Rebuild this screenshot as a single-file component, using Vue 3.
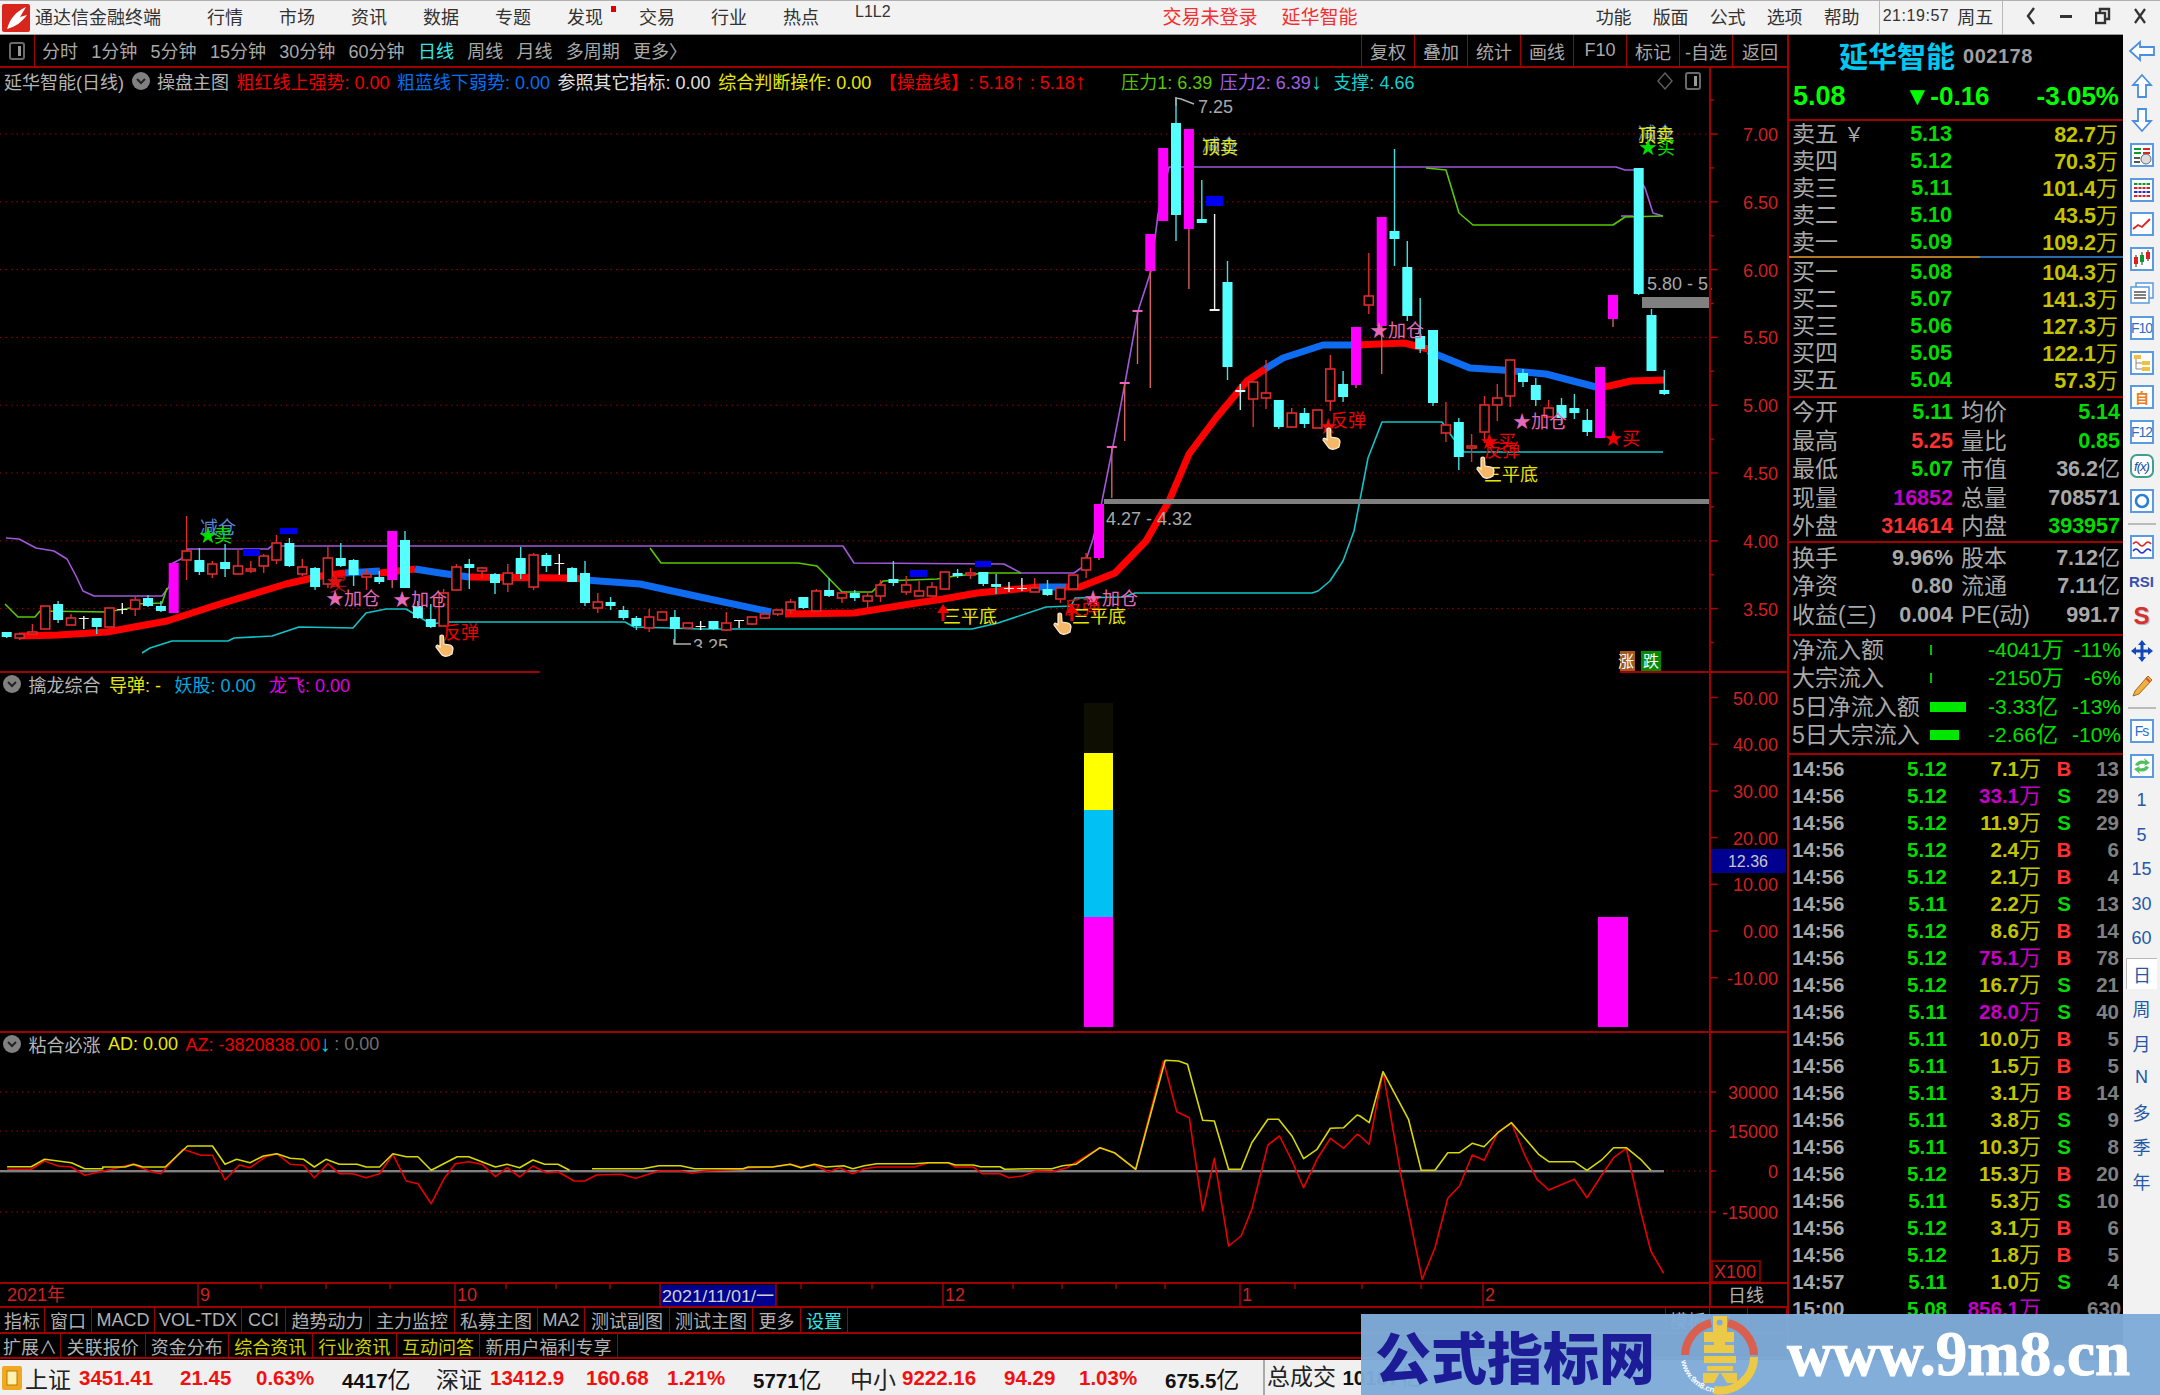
<template>
  <div class="app">
    <header class="titlebar">
      <svg class="logo" viewBox="0 0 28 28" width="28" height="28">
        <rect width="28" height="28" rx="2" fill="#d8261c" />
        <path d="M5 25 C8 15 13 8 24 3 L18 13 L25 11 C20 18 13 23 5 25Z" fill="#fff" />
      </svg>
      <span class="appname">通达信金融终端</span>
      <nav class="menu">
        <span v-for="m in menus" :key="m" class="menu-item">{{ m }}<i v-if="m === '发现'" class="dot"></i></span>
        <span class="menu-item latin">L1L2</span>
      </nav>
      <span class="alert a1">交易未登录</span>
      <span class="alert a2">延华智能</span>
      <nav class="menu menu2">
        <span v-for="m in menus2" :key="m" class="menu-item">{{ m }}</span>
      </nav>
      <div class="clock"><span class="time">21:19:57</span><span>周五</span></div>
      <div class="winctl">
        <svg width="12" height="20" viewBox="0 0 12 20"><path d="M9 2 L3 10 L9 18" fill="none" stroke="#333" stroke-width="2.4" /></svg>
        <svg width="14" height="20" viewBox="0 0 14 20"><rect x="1" y="9" width="12" height="3" fill="#333" /></svg>
        <svg width="16" height="20" viewBox="0 0 16 20"><rect x="1" y="7" width="9" height="10" fill="none" stroke="#333" stroke-width="2.4" /><path d="M5 6 V3 H14 V13 H11" fill="none" stroke="#333" stroke-width="2.4" /></svg>
        <svg width="14" height="20" viewBox="0 0 14 20"><path d="M2 3 L12 17 M12 3 L2 17" stroke="#333" stroke-width="2.2" /></svg>
      </div>
    </header>

    <div class="body">
      <section class="left">
        <div class="toolbar">
          <div class="tb-icon"><span class="win-ico"></span></div>
          <div class="periods">
            <span v-for="p in periods" :key="p" :class="{ on: p === '日线' }">{{ p }}</span>
            <span>更多〉</span>
          </div>
          <div class="tb-cells">
            <span v-for="c in tbCells" :key="c">{{ c }}</span>
          </div>
        </div>

        <div class="pane pane-main">
          <svg class="chart" width="1787" height="605" viewBox="0 67 1787 605">
            <line v-for="g in mainGrid" :key="g" x1="0" x2="1710" :y1="g" :y2="g" class="dots" />
            <polyline :points="pts(purpleLine)" class="thin" stroke="#a058d8" />
            <polyline :points="pts(purpleStub)" class="thin" stroke="#a058d8" />
            <polyline :points="pts(greenLineA)" class="thin" stroke="#58c800" />
            <polyline :points="pts(greenLineB)" class="thin" stroke="#58c800" />
            <polyline :points="pts(greenLineC)" class="thin" stroke="#58c800" />
            <polyline :points="pts(cyanLine)" class="thin" stroke="#10c4c8" />
            <polyline v-for="(s, i) in maLine" :key="i" :points="pts(s.p)" class="ma" :stroke="s.c" />

            <rect x="1104" y="498" width="606" height="5" fill="#808080" />
            <rect x="1642" y="296" width="68" height="11" fill="#808080" />

            <g v-for="c in candles" :key="c.i">
              <line :x1="c.x" :x2="c.x" :y1="c.hi" :y2="c.lo" :stroke="c.wick" stroke-width="1.4" />
              <rect v-if="c.type === 'r'" :x="c.x - 4.5" :y="c.top" width="9" :height="c.h" fill="#000" stroke="#e02c2c" stroke-width="1.6" />
              <rect v-else :x="c.x - 5" :y="c.top" width="10" :height="c.h" :fill="c.fill" />
            </g>

            <rect v-for="b in blueBlocks" :key="b[0]" :x="b[0]" :y="b[1]" :width="b[2]" :height="b[3]" fill="#0000f0" />

            <text v-for="(a, i) in notes" :key="i" :x="a[0]" :y="a[1]" :fill="a[3]" class="note">{{ a[2] }}</text>
            <g v-for="h in hands" :key="h[0]" :transform="`translate(${h[0]} ${h[1]})`">
              <path d="M5 1 Q7 -1 8.5 1 L9 9 L15 10 Q18 11 18 14 L17 19 Q11 23 7 20 L1 12 Q1 9 4 11 L5 12Z" fill="#f4b868" stroke="#fff0d8" stroke-width="1.2" />
            </g>
            <g v-for="u in upArrows" :key="u" fill="#f00000">
              <polygon :points="`${u - 6},612 ${u},603 ${u + 6},612`" />
              <rect :x="u - 1.5" y="610" width="3" height="10" />
            </g>

            <polyline points="1176,105 1176,97 1181,98 1194,103" fill="none" stroke="#b0b0b0" stroke-width="1.4" />
            <text x="1198" y="112" class="gr">7.25</text>
            <text x="1106" y="524" class="gr">4.27 - 4.32</text>
            <text x="1647" y="289" class="gr">5.80 - 5.</text>
            <polyline points="674,638 674,643 691,643" fill="none" stroke="#b0b0b0" stroke-width="1.4" />
            <text x="693" y="651" class="gr">3.25</text>
            <rect x="680" y="647" width="70" height="23" fill="#000" />

            <rect x="1620" y="650" width="15" height="20" fill="#a05a20" />
            <rect x="1641" y="650" width="20" height="20" fill="#068a06" />
            <text x="1618" y="666" class="badge">涨</text>
            <text x="1643" y="666" class="badge">跌</text>

            <rect x="0" y="670" width="540" height="2" fill="#a00000" />
            <rect x="1620" y="670" width="167" height="2" fill="#a00000" />
            <rect x="1709" y="67" width="2" height="605" fill="#a00000" />
            <g v-for="t in mainTicks" :key="t.y">
              <line x1="1710" :x2="t.major ? 1718 : 1714" :y1="t.y" :y2="t.y" stroke="#b00000" stroke-width="1.5" />
              <text v-if="t.label" x="1778" :y="t.y + 7" class="ax">{{ t.label }}</text>
            </g>
          </svg>
          <div class="pane-head">
            <span class="gy">延华智能(日线)</span>
            <svg class="chev" width="18" height="18" viewBox="0 0 18 18"><circle cx="9" cy="9" r="9" fill="#808080" /><path d="M5 7 L9 11 L13 7" fill="none" stroke="#222" stroke-width="2" /></svg>
            <span class="gy">操盘主图</span>
            <span class="rd">粗红线上强势: 0.00</span>
            <span class="bl">粗蓝线下弱势: 0.00</span>
            <span class="wh">参照其它指标: 0.00</span>
            <span class="yl">综合判断操作: 0.00</span>
            <span class="rd">【操盘线】: 5.18<b class="arr">↑</b> : 5.18<b class="arr">↑</b></span>
            <span class="gn gap1">压力1: 6.39</span>
            <span class="pu">压力2: 6.39<b class="arr cy">↓</b></span>
            <span class="cy gap2">支撑: 4.66</span>
            <span class="head-ico">
              <svg width="16" height="20" viewBox="0 0 16 20"><path d="M8 2 L15 10 L8 18 L1 10Z" fill="none" stroke="#606060" stroke-width="1.4" /></svg>
              <span class="win-ico"></span>
            </span>
          </div>
        </div>

        <div class="pane pane-sub">
          <svg class="chart" width="1787" height="358" viewBox="0 672 1787 358">
            <rect x="1084" y="702" width="29" height="50" fill="#0e0e02" />
            <rect x="1084" y="752" width="29" height="57" fill="#ffff00" />
            <rect x="1084" y="809" width="29" height="107" fill="#00c0f4" />
            <rect x="1084" y="916" width="29" height="110" fill="#ff00ff" />
            <rect x="1598" y="916" width="30" height="110" fill="#ff00ff" />
            <rect x="1709" y="672" width="2" height="358" fill="#a00000" />
            <rect x="1711" y="848" width="75" height="24" fill="#000090" />
            <text x="1748" y="866" class="boxed">12.36</text>
            <g v-for="t in subTicks" :key="t.y">
              <line x1="1710" x2="1718" :y1="t.y" :y2="t.y" stroke="#b00000" stroke-width="1.5" />
              <text x="1778" :y="t.y + 7" class="ax">{{ t.label }}</text>
            </g>
          </svg>
          <div class="pane-head head2">
            <svg class="chev" width="18" height="18" viewBox="0 0 18 18"><circle cx="9" cy="9" r="9" fill="#808080" /><path d="M5 7 L9 11 L13 7" fill="none" stroke="#222" stroke-width="2" /></svg>
            <span class="gy">擒龙综合</span>
            <span class="yl sp">导弹: -</span>
            <span class="ao sp2">妖股: 0.00</span>
            <span class="mg sp2">龙飞: 0.00</span>
          </div>
        </div>

        <div class="pane pane-ad">
          <svg class="chart" width="1787" height="253" viewBox="0 1030 1787 253">
            <rect x="0" y="1029" width="1787" height="3" fill="#a00000" />
            <line v-for="g in adGrid" :key="g" x1="0" x2="1710" :y1="g" :y2="g" class="dots" />
            <rect x="0" y="1169" width="1664" height="2.4" fill="#808080" />
            <polyline :points="pts(adRed)" class="thin" stroke="#e80000" stroke-width="1.6" />
            <polyline :points="pts(adYellowA)" class="thin" stroke="#d8d800" stroke-width="2" />
            <polyline :points="pts(adYellowB)" class="thin" stroke="#d8d800" stroke-width="2" />
            <rect x="1709" y="1030" width="2" height="253" fill="#a00000" />
            <g v-for="t in adTicks" :key="t.y">
              <line x1="1710" x2="1716" :y1="t.y" :y2="t.y" stroke="#b00000" stroke-width="1.5" />
              <text x="1778" :y="t.y + 7" class="ax">{{ t.label }}</text>
            </g>
            <rect x="1712" y="1260" width="48" height="21" fill="none" stroke="#a00000" stroke-width="1.5" />
            <text x="1714" y="1277" class="ax start">X100</text>
            <rect x="0" y="1281" width="1787" height="2" fill="#a00000" />
          </svg>
          <div class="pane-head head3">
            <svg class="chev" width="18" height="18" viewBox="0 0 18 18"><circle cx="9" cy="9" r="9" fill="#808080" /><path d="M5 7 L9 11 L13 7" fill="none" stroke="#222" stroke-width="2" /></svg>
            <span class="gy">粘合必涨</span>
            <span class="yl">AD: 0.00</span>
            <span class="rd">AZ: -3820838.00<b class="arr cy">↓</b></span>
            <span class="dim">: 0.00</span>
          </div>
        </div>

        <svg class="chart" width="1787" height="22" viewBox="0 1283 1787 22">
          <rect x="660" y="1284" width="116" height="21" fill="#000090" />
          <line v-for="s in axisMarks" :key="s" :x1="s" :x2="s" y1="1283" y2="1305" stroke="#a00000" stroke-width="1.5" />
          <line v-for="s in axisTicks" :key="s" :x1="s" :x2="s" y1="1283" y2="1288" stroke="#a00000" stroke-width="1.5" />
          <text v-for="s in axisLabels" :key="s[1]" :x="s[0]" y="1300" class="ax start">{{ s[1] }}</text>
          <text x="662" y="1301" class="dateTag" textLength="112" lengthAdjust="spacingAndGlyphs">2021/11/01/一</text>
          <text x="1728" y="1301" class="axis-name">日线</text>
          <rect x="1709" y="1283" width="2" height="22" fill="#a00000" />
        </svg>

        <div class="tabs tabs1">
          <span v-for="t in tabs1" :key="t" :class="{ cyan: t === '设置' }">{{ t }}</span>
          <span></span>
          <span>模板</span>
          <span>∧</span>
          <span></span>
        </div>
        <div class="tabs tabs2">
          <span v-for="t in tabs2" :key="t.n" :class="{ ylw: t.y }">{{ t.n }}</span>
        </div>
      </section>

      <aside class="panel">
        <div class="q-name"><span class="stock">延华智能</span><span class="code">002178</span></div>
        <div class="q-price"><span class="p-now">5.08</span><span class="p-chg">▼-0.16</span><span class="p-pct">-3.05%</span></div>

        <div class="rows sell">
          <div v-for="r in sells" :key="r[0]" class="row">
            <span class="lbl">{{ r[0] }}<i v-if="r[0] === '卖五'" class="yen">￥</i></span>
            <b class="v px green">{{ r[1] }}</b>
            <b class="v vol ylw">{{ r[2] }}<em>万</em></b>
          </div>
        </div>
        <div class="divider"></div>
        <div class="rows buy">
          <div v-for="r in buys" :key="r[0]" class="row">
            <span class="lbl">{{ r[0] }}</span>
            <b class="v px green">{{ r[1] }}</b>
            <b class="v vol ylw">{{ r[2] }}<em>万</em></b>
          </div>
        </div>

        <div class="rows stat topline">
          <div v-for="r in stats" :key="r[0]" class="row2">
            <span class="lbl">{{ r[0] }}</span>
            <b class="v v1" :class="r[2]">{{ r[1] }}</b>
            <span class="lbl l2">{{ r[3] }}</span>
            <b class="v v2" :class="r[5]">{{ num(r[4]) }}<em>{{ unit(r[4]) }}</em></b>
          </div>
        </div>
        <div class="rows stat topline stat2">
          <div v-for="r in stats2" :key="r[0]" class="row2">
            <span class="lbl">{{ r[0] }}</span>
            <b class="v v1 grey">{{ r[1] }}</b>
            <span class="lbl l2">{{ r[2] }}</span>
            <b class="v v2 grey">{{ num(r[3]) }}<em>{{ unit(r[3]) }}</em></b>
          </div>
        </div>
        <div class="rows flow topline">
          <div v-for="r in flows" :key="r[0]" class="row3">
            <span class="lbl">{{ r[0] }}</span>
            <span class="barcell"><i class="bar" :class="{ slim: r[1] < 4 }" :style="{ width: r[1] + 'px' }"></i></span>
            <b class="v fv green">{{ num(r[2]) }}<em>{{ unit(r[2]) }}</em></b>
            <b class="v fp green">{{ r[3] }}</b>
          </div>
        </div>
        <div class="rows ticks topline">
          <div v-for="(r, i) in ticks" :key="i" class="row4">
            <b class="t-time">{{ r[0] }}</b>
            <b class="t-px green">{{ r[1] }}</b>
            <b class="t-vol" :class="r[2] >= 20 ? 'mag' : 'ylw'">{{ r[2] }}<em>万</em></b>
            <b class="t-bs" :class="r[3] === 'B' ? 'red' : 'green'">{{ r[3] }}</b>
            <b class="t-ct">{{ r[4] }}</b>
          </div>
        </div>
      </aside>

      <aside class="side">
        <div class="tool"><svg width="28" height="22" viewBox="0 0 28 22"><path d="M2 11 L12 2 V7 H26 V15 H12 V20Z" class="arrow" /></svg></div>
        <div class="tool"><svg width="22" height="26" viewBox="0 0 22 26"><path d="M11 2 L20 12 H15 V24 H7 V12 H2Z" class="arrow" /></svg></div>
        <div class="tool"><svg width="22" height="26" viewBox="0 0 22 26"><path d="M11 24 L20 14 H15 V2 H7 V14 H2Z" class="arrow" /></svg></div>
        <div class="tool"><svg width="24" height="24" viewBox="0 0 24 24"><rect x="1" y="1" width="22" height="22" class="frame" /><path d="M4 6H11M4 10H11" stroke="#0a9a30" stroke-width="2" /><path d="M13 6H20M13 10H20" stroke="#e02020" stroke-width="2" /><path d="M4 15H10M4 19H10" stroke="#555" stroke-width="2" /><circle cx="16" cy="16" r="5" fill="#ddd" stroke="#666" /></svg></div>
        <div class="tool"><svg width="24" height="24" viewBox="0 0 24 24"><rect x="1" y="1" width="22" height="22" class="frame" /><path d="M4 6H20" stroke="#0a9a30" stroke-width="2" /><path d="M4 10H20" stroke="#e02020" stroke-width="2" /><path d="M4 14H20" stroke="#2030d0" stroke-width="2" /><path d="M4 18H20" stroke="#e02020" stroke-width="2" /><path d="M8 4V20M12 4V20M16 4V20" stroke="#fff" /></svg></div>
        <div class="tool"><svg width="24" height="24" viewBox="0 0 24 24"><rect x="1" y="1" width="22" height="22" class="frame" /><path d="M3 17 L8 13 L12 15 L20 7" fill="none" stroke="#e02020" stroke-width="1.8" /></svg></div>
        <div class="tool"><svg width="24" height="24" viewBox="0 0 24 24"><rect x="1" y="1" width="22" height="22" class="frame" /><path d="M6 8V20M12 5V18M18 3V14" stroke="#222" /><rect x="4" y="10" width="4" height="7" fill="#e02020" /><rect x="10" y="8" width="4" height="7" fill="#0a9a30" /><rect x="16" y="5" width="4" height="7" fill="#e02020" /></svg></div>
        <div class="tool"><svg width="24" height="24" viewBox="0 0 24 24"><rect x="6" y="2" width="17" height="15" fill="#fff" stroke="#5a9ae0" stroke-width="1.5" /><rect x="1" y="6" width="18" height="16" fill="#fff" stroke="#5a9ae0" stroke-width="1.5" /><path d="M4 11H16M4 14H16M4 17H16" stroke="#555" stroke-width="1.4" /></svg></div>
        <div class="tool"><span class="boxed-t">F10</span></div>
        <div class="tool"><svg width="24" height="24" viewBox="0 0 24 24"><rect x="1" y="1" width="22" height="22" class="frame" /><path d="M6 7V18H12M6 12H12" fill="none" stroke="#888" /><rect x="4" y="4" width="7" height="4" fill="#f0c040" /><rect x="12" y="10" width="8" height="4" fill="#f0c040" /><rect x="12" y="16" width="8" height="4" fill="#f0c040" /></svg></div>
        <div class="tool"><span class="boxed-t zi">自</span></div>
        <div class="tool"><span class="boxed-t">F12</span></div>
        <div class="tool"><span class="boxed-t fx">f(x)</span></div>
        <div class="tool"><svg width="24" height="24" viewBox="0 0 24 24"><rect x="1" y="1" width="22" height="22" class="frame" /><circle cx="12" cy="12" r="6" fill="none" stroke="#2a80d0" stroke-width="2.6" /></svg></div>
        <div class="tool-sep"></div>
        <div class="tool"><svg width="24" height="24" viewBox="0 0 24 24"><rect x="1" y="1" width="22" height="22" class="frame" /><path d="M3 9 Q6 5 9 9 T15 9 T21 9" fill="none" stroke="#e02020" stroke-width="1.5" /><path d="M3 16 Q6 12 9 16 T15 16 T21 16" fill="none" stroke="#2030d0" stroke-width="1.5" /></svg></div>
        <div class="tool"><span class="rsi">RSI</span></div>
        <div class="tool"><span class="big-s">S</span></div>
        <div class="tool"><svg width="24" height="24" viewBox="0 0 24 24" fill="#1048b8"><path d="M12 1 L16 6 H8Z M12 23 L16 18 H8Z M1 12 L6 8 V16Z M23 12 L18 8 V16Z" /><rect x="6" y="10.5" width="12" height="3" /><rect x="10.5" y="6" width="3" height="12" /></svg></div>
        <div class="tool"><svg width="24" height="24" viewBox="0 0 24 24"><path d="M5 18 L18 3 L22 7 L9 21 L3 23Z" fill="#f0b040" stroke="#a06a20" /><path d="M16 5 L20 9" stroke="#d85040" stroke-width="2" /></svg></div>
        <div class="tool-sep"></div>
        <div class="tool"><span class="boxed-t">Fs</span></div>
        <div class="tool"><svg width="24" height="24" viewBox="0 0 24 24"><rect x="1" y="1" width="22" height="22" class="frame" /><path d="M5 11 Q8 5 15 7 L14 4 L20 9 L14 12 L15 10 Q10 9 8 12Z M19 13 Q16 19 9 17 L10 20 L4 15 L10 12 L9 14 Q14 15 16 12Z" fill="#50c060" /></svg></div>
        <div v-for="n in sideNums" :key="n" class="tool nm" :class="{ active: n === '日' }"><span>{{ n }}</span></div>
      </aside>
    </div>

    <footer class="status">
      <svg width="25" height="30" viewBox="0 0 25 30"><rect x="2" y="3" width="20" height="24" rx="2" fill="#f0a820" /><rect x="7" y="8" width="10" height="14" fill="#fff1b0" stroke="#c07800" /></svg>
      <template v-for="x in indexes" :key="x[0]">
        <span class="ix-name">{{ x[0] }}</span>
        <b class="ix-red">{{ x[1] }}</b>
        <b class="ix-red">{{ x[2] }}</b>
        <b class="ix-red">{{ x[3] }}</b>
        <b class="ix-amt">{{ x[4] }}<em>亿</em></b>
      </template>
      <span class="ix-total">总成交 <b class="ix-amt">10187<em>亿</em></b></span>
    </footer>

    <div class="watermark">
      <span class="wm-cn">公式指标网</span>
      <svg class="wm-logo" width="84" height="84" viewBox="18 12 84 84">
        <defs><path id="wmArc" d="M22 60 A40 40 0 0 0 58 92" /></defs>
        <path d="M26 54 A34 34 0 0 1 52 22" fill="none" stroke="#d9604e" stroke-width="8" />
        <path d="M69 22 A34 34 0 0 1 95 54" fill="none" stroke="#d9604e" stroke-width="8" />
        <path d="M95 56 A34 34 0 0 1 55 89" fill="none" stroke="#ecca48" stroke-width="8" />
        <path d="M54 15 H68 V31 H75 V52 H45 V31 H54Z" fill="#ecca48" />
        <circle cx="60.7" cy="21.5" r="3" fill="#7fabd9" />
        <rect x="45" y="41" width="10" height="3" fill="#7fabd9" />
        <rect x="66" y="41" width="9" height="3" fill="#7fabd9" />
        <rect x="45" y="55" width="32" height="7" fill="#ecca48" />
        <rect x="48" y="65" width="26" height="5" fill="#ecca48" />
        <path d="M44 72 H78 V82 H68 L61 71 L55 82 H44Z" fill="#ecca48" />
        <text class="wm-small"><textPath href="#wmArc">www.9m8.cn</textPath></text>
      </svg>
      <span class="wm-url">www.9m8.cn</span>
    </div>
  </div>
</template>

<script setup>
const pts = (a) => a.map((p) => p.join(',')).join(' ')
const num = (s) => s.replace(/[万亿]/, '')
const unit = (s) => (/[万亿]/.exec(s) || [''])[0]

const menus = ['行情', '市场', '资讯', '数据', '专题', '发现', '交易', '行业', '热点']
const menus2 = ['功能', '版面', '公式', '选项', '帮助']
const periods = ['分时', '1分钟', '5分钟', '15分钟', '30分钟', '60分钟', '日线', '周线', '月线', '多周期']
const tbCells = ['复权', '叠加', '统计', '画线', 'F10', '标记', '-自选', '返回']
const tabs1 = ['指标', '窗口', 'MACD', 'VOL-TDX', 'CCI', '趋势动力', '主力监控', '私募主图', 'MA2', '测试副图', '测试主图', '更多', '设置']
const tabs2 = [
  { n: '扩展∧' }, { n: '关联报价' }, { n: '资金分布' }, { n: '综合资讯', y: 1 },
  { n: '行业资讯', y: 1 }, { n: '互动问答', y: 1 }, { n: '新用户福利专享' },
]
const sideNums = ['1', '5', '15', '30', '60', '日', '周', '月', 'N', '多', '季', '年']

// [index, type, body top, body bottom, high, low] in page pixels, read off the picture
const raw = [
  [0,'c',631,636,631,637],[1,'r',633,637,632,639],[2,'r',631,633,623,633],[3,'r',605,628,605,628],
  [4,'c',603,619,600,622],[5,'r',617,624,613,624],[6,'w',617,618,615,628],[7,'c',617,626,617,633],
  [8,'r',607,626,607,626],[9,'w',608,609,602,613],[10,'r',599,608,595,615],[11,'c',597,605,594,606],
  [12,'c',605,610,600,611],[13,'m',562,612,562,612],[14,'r',550,559,515,579],[15,'c',559,571,547,574],
  [16,'r',563,573,560,577],[17,'c',561,568,543,576],[18,'r',565,573,549,573],[19,'r',568,570,560,572],
  [20,'r',555,565,553,572],[21,'r',542,559,534,563],[22,'c',542,565,537,566],[23,'r',566,573,558,575],
  [24,'c',567,586,566,589],[25,'r',557,583,546,587],[26,'c',557,565,542,566],[27,'c',559,574,558,585],
  [28,'r',573,576,568,589],[29,'c',576,581,570,583],[30,'m',530,579,530,587],[31,'c',539,587,530,587],
  [32,'c',605,617,600,618],[33,'c',618,626,603,627],[34,'r',592,625,588,625],[35,'r',566,589,563,589],
  [36,'c',563,567,558,588],[37,'r',567,570,566,577],[38,'c',573,582,572,593],[39,'r',572,583,563,591],
  [40,'c',557,573,546,578],[41,'r',554,586,552,589],[42,'c',554,565,552,571],[43,'w',562,563,553,574],
  [44,'c',567,581,566,581],[45,'c',572,602,560,605],[46,'r',601,607,592,612],[47,'c',601,605,596,609],
  [48,'c',609,617,605,619],[49,'c',617,625,615,629],[50,'r',616,627,608,631],[51,'r',611,619,611,619],
  [52,'c',616,628,609,643],[53,'r',622,627,622,628],[54,'w',625,626,620,629],[55,'c',620,628,620,629],
  [56,'r',622,629,611,630],[57,'w',619,620,619,627],[58,'r',616,623,616,624],[59,'r',613,617,613,618],
  [60,'r',609,613,608,615],[61,'r',601,609,598,613],[62,'c',596,607,596,608],[63,'r',590,610,588,610],
  [64,'c',589,595,577,596],[65,'r',592,597,591,602],[66,'c',592,597,589,600],[67,'r',595,600,590,607],
  [68,'r',584,595,579,601],[69,'c',578,582,560,585],[70,'r',584,591,575,594],[71,'r',590,595,580,595],
  [72,'r',586,595,581,595],[73,'r',571,588,571,588],[74,'c',572,575,568,577],[75,'r',572,574,567,578],
  [76,'c',571,583,571,585],[77,'c',583,586,573,593],[78,'w',587,588,581,591],[79,'w',587,588,577,590],
  [80,'r',587,591,577,591],[81,'c',588,594,579,595],[82,'r',587,598,587,602],[83,'r',574,588,574,588],
  [84,'r',557,569,552,577],[85,'m',503,557,503,559],[86,'w2',445,447,445,497],[87,'w2',381,383,381,440],
  [88,'w2',309,311,309,363],[89,'m',233,270,233,387],[90,'m',147,220,147,220],[91,'c',122,214,96,240],
  [92,'m',128,228,128,288],[93,'c',218,222,179,222],[94,'w',308,310,213,310],[95,'c',281,366,260,379],
  [96,'w3',389,391,383,409],[97,'r',381,398,380,426],[98,'r',392,397,359,408],[99,'c',399,426,399,428],
  [100,'r',412,426,407,427],[101,'c',412,423,407,427],[102,'r',409,427,409,427],[103,'r',368,400,354,410],
  [104,'c',383,396,370,401],[105,'m',326,384,326,387],[106,'r',295,304,252,313],[107,'m',216,325,216,373],
  [108,'c',230,238,148,265],[109,'c',266,315,240,320],[110,'c',335,348,297,352],[111,'c',329,402,329,405],
  [112,'r',424,432,401,441],[113,'c',421,456,417,469],[114,'r',445,447,433,461],[115,'r',404,431,395,442],
  [116,'r',397,404,383,420],[117,'r',359,395,359,406],[118,'c',372,381,368,386],[119,'c',384,399,377,405],
  [120,'r',407,416,399,416],[121,'c',404,417,397,423],[122,'c',407,412,393,418],[123,'c',419,431,408,435],
  [124,'m',366,437,366,437],[125,'m',294,318,294,326],[127,'c',167,293,167,294],[128,'c',314,370,308,370],
  [129,'c',389,393,369,394],
]
const candleFill = { c: '#55ffff', m: '#ff00ff', w: '#f0f0f0', w2: '#f060c0', w3: '#c8ffff' }
const wickColor = { r: '#e02c2c', c: '#40e0e0', m: '#d86060', w: '#f0f0f0', w2: '#d86060', w3: '#a0f0f0' }
const candles = raw.map(([i, type, top, bottom, hi, lo]) => ({
  i, type, top, hi, lo,
  x: +(6.7 + 12.85 * i).toFixed(1),
  h: bottom - top,
  fill: candleFill[type],
  wick: wickColor[type],
}))

const purpleLine = [[6,537],[19,538],[36,547],[54,550],[67,558],[76,575],[83,590],[94,595],[162,595],[169,586],[173,562],[181,558],[188,548],[268,548],[272,545],[843,545],[854,562],[1004,563],[1021,572],[1074,572],[1084,565],[1093,538],[1100,510],[1113,445],[1125,382],[1138,310],[1151,270],[1158,213],[1169,166],[1616,166],[1625,169],[1634,169],[1645,187],[1653,212],[1663,215]]
const purpleStub = [[1621,215],[1633,215]]
const greenLineA = [[5,603],[18,616],[35,616],[40,610],[107,611],[130,607],[134,603],[162,602],[167,587]]
const greenLineB = [[650,547],[661,562],[798,562],[817,565],[842,591],[872,591],[883,580],[937,578],[955,575],[986,572],[1021,572]]
const greenLineC = [[1426,167],[1446,169],[1459,212],[1473,224],[1613,224],[1625,216],[1663,215]]
const cyanLine = [[142,652],[150,647],[172,640],[228,640],[234,637],[272,635],[299,626],[353,627],[366,612],[386,608],[406,608],[431,623],[446,621],[625,621],[634,626],[670,627],[700,628],[972,628],[998,622],[1046,606],[1071,605],[1075,597],[1124,596],[1135,592],[1312,592],[1318,590],[1330,580],[1343,560],[1354,530],[1368,457],[1382,421],[1442,421],[1453,437],[1464,451],[1663,451]]
const maLine = [
  { c: '#ff0000', p: [[19,635],[58,634],[107,631],[134,626],[167,620],[223,602],[286,583],[321,575],[345,572]] },
  { c: '#0f6cf0', p: [[345,572],[380,570]] },
  { c: '#ff0000', p: [[380,572],[415,568]] },
  { c: '#0f6cf0', p: [[415,568],[440,572],[469,576]] },
  { c: '#ff0000', p: [[469,576],[567,577],[585,578]] },
  { c: '#0f6cf0', p: [[585,579],[640,583],[700,596],[771,611]] },
  { c: '#ff0000', p: [[785,613],[854,612],[910,603],[943,598],[977,592],[1039,586]] },
  { c: '#0f6cf0', p: [[1039,586],[1066,586]] },
  { c: '#ff0000', p: [[1066,586],[1080,586],[1115,572],[1146,540],[1169,500],[1189,453],[1216,417],[1247,380],[1265,368]] },
  { c: '#0f6cf0', p: [[1265,368],[1283,357],[1323,344],[1355,344]] },
  { c: '#ff0000', p: [[1355,344],[1404,342],[1428,348]] },
  { c: '#0f6cf0', p: [[1428,350],[1470,367],[1502,369],[1546,373],[1596,386]] },
  { c: '#ff0000', p: [[1596,386],[1609,385],[1631,380],[1665,379]] },
]
const blueBlocks = [[243,548,17,7],[280,527,17,6],[910,569,17,7],[975,560,16,6],[1206,195,17,10]]

const pink = '#e868b8'
const notes = [
  [200,533,'减仓','#5c88d8'],[199,541,'★','#00e000'],[214,541,'卖','#00e000'],
  [329,590,'买','#a01010'],[326,587,'★','#e01010'],
  [326,604,'★加仓',pink],[393,605,'★加仓',pink],[443,638,'反弹','#f00000'],
  [943,622,'三平底','#e4e400'],[1084,604,'★加仓',pink],[1064,613,'反弹','#f00000'],[1072,622,'三平底','#e4e400'],
  [1202,151,'减仓','#5c88d8'],[1202,153,'顶卖','#e8e800'],
  [1638,139,'减仓','#5c88d8'],[1638,141,'顶卖','#e8e800'],[1639,153,'★买','#00e000'],
  [1370,336,'★加仓',pink],[1513,427,'★加仓',pink],[1330,426,'反弹','#f00000'],[1319,432,'★','#e01010'],
  [1480,447,'★买','#f00000'],[1484,456,'反弹','#f00000'],[1484,480,'三平底','#e4e400'],
  [1604,444,'★买','#f00000'],
]
const hands = [[435,634],[1053,612],[1322,427],[1476,456]]
const upArrows = [943,1072]

const mainY = (p) => 133 + (7 - p) * 135.6
const mainGrid = [7, 6.5, 6, 5.5, 5, 4.5, 4, 3.5].map(mainY)
const mainTicks = []
for (let p = 7.25; p >= 3.25; p -= 0.25) {
  const major = Math.abs(p * 2 - Math.round(p * 2)) < 0.01
  mainTicks.push({ y: mainY(p), major, label: major && p <= 7 ? p.toFixed(2) : '' })
}
const subTicks = [50, 40, 30, 20, 10, 0, -10].map((v) => ({ y: 930 - v * 4.67, label: v.toFixed(2) }))
const adGrid = [1091, 1130, 1170, 1211]
const adTicks = [['30000',1091],['15000',1130],['0',1170],['-15000',1211]].map(([label, y]) => ({ label, y }))
const axisMarks = [198,455,660,776,943,1240,1483]
const axisTicks = [261,326,390,506,556,610,801,872,1013,1062,1116,1165,1295,1362,1421]
const axisLabels = [[7,'2021年'],[200,'9'],[457,'10'],[945,'12'],[1242,'1'],[1485,'2']]

// pane 3 lines, traced from crops: a = crop at x/1.12, b = crop at 1360 + x/1.96
const a = (l) => l.map(([x, y]) => [+(x / 1.12).toFixed(1), +(1020 + y / 3).toFixed(1)])
const b = (l) => l.map(([x, y]) => [+(1360 + x / 1.96).toFixed(1), +(1030 + y / 3).toFixed(1)])
const adYellowA = a([[8,437],[35,437],[50,415],[80,425],[95,443],[115,443],[115,438],[140,438],[150,430],[160,438],[185,438],[210,375],[238,375],[252,430],[265,415],[280,425],[295,405],[310,398],[325,412],[340,415],[352,438],[365,415],[380,430],[400,430],[410,438],[425,438],[440,398],[455,407],[468,407],[483,448],[512,407],[525,407],[555,438],[568,430],[582,440],[597,417],[610,430],[625,430],[638,448]])
const adYellowB = [
  ...a([[663,443],[705,443],[720,443],[738,434],[762,434],[778,443],[832,443],[838,438],[865,438],[885,430],[897,440],[912,430],[925,438],[945,434],[955,443],[968,434],[982,428],[1024,428],[1040,425],[1062,425],[1070,432],[1090,432],[1098,437],[1120,437],[1125,445],[1150,443],[1178,443],[1190,434],[1205,430],[1232,380],[1248,395],[1272,445],[1305,118],[1320,120],[1330,130],[1347,298],[1360,300],[1376,445],[1390,445],[1402,365],[1420,295],[1432,295],[1447,345],[1460,413],[1475,385],[1490,322],[1505,320],[1520,282]]),
  ...b([[0,255],[18,275],[45,122],[95,265],[120,418],[147,418],[172,365],[195,365],[220,337],[243,347],[270,305],[297,275],[350,370],[370,392],[420,392],[445,418],[475,385],[497,350],[522,350],[550,385],[570,418]]),
]
const adRed = [
  ...a([[8,445],[35,445],[50,420],[65,435],[80,438],[95,463],[112,452],[125,445],[148,430],[170,452],[180,458],[205,385],[225,403],[238,403],[252,477],[268,432],[280,440],[297,408],[310,398],[325,430],[340,433],[352,470],[367,428],[380,458],[395,458],[410,470],[425,458],[440,400],[455,480],[468,488],[483,548],[498,470],[510,428],[525,422],[540,430],[555,467],[568,440],[582,468],[597,435],[612,455],[625,452],[643,480],[655,480],[668,462],[695,460],[712,472],[738,450],[762,450],[775,457],[790,450],[832,445],[838,440],[865,438],[885,430],[897,438],[912,432],[928,452],[940,440],[955,458],[968,443],[982,438],[1024,438],[1040,425],[1062,425],[1070,438],[1090,438],[1100,458],[1120,458],[1130,470],[1145,465],[1160,450],[1178,452],[1195,440],[1232,380],[1248,395],[1272,445],[1303,120],[1318,272],[1332,290],[1347,570],[1360,412],[1376,675],[1390,645],[1402,565],[1420,372],[1433,345],[1447,420],[1460,500],[1475,415],[1490,352],[1505,382],[1520,340]]),
  ...b([[0,315],[18,340],[45,122],[80,430],[122,745],[147,650],[172,502],[195,465],[220,372],[243,388],[270,305],[297,275],[322,370],[347,445],[370,477],[420,445],[445,500],[475,430],[497,380],[522,352],[550,540],[570,660],[595,727]]),
]

const sells = [['卖五','5.13','82.7'],['卖四','5.12','70.3'],['卖三','5.11','101.4'],['卖二','5.10','43.5'],['卖一','5.09','109.2']]
const buys = [['买一','5.08','104.3'],['买二','5.07','141.3'],['买三','5.06','127.3'],['买四','5.05','122.1'],['买五','5.04','57.3']]
const stats = [
  ['今开','5.11','green','均价','5.14','green'],
  ['最高','5.25','red','量比','0.85','green'],
  ['最低','5.07','green','市值','36.2亿','grey'],
  ['现量','16852','mag','总量','708571','grey'],
  ['外盘','314614','red','内盘','393957','green'],
]
const stats2 = [['换手','9.96%','股本','7.12亿'],['净资','0.80','流通','7.11亿'],['收益(三)','0.004','PE(动)','991.7']]
const flows = [['净流入额',2,'-4041万','-11%'],['大宗流入',1.5,'-2150万','-6%'],['5日净流入额',36,'-3.33亿','-13%'],['5日大宗流入',29,'-2.66亿','-10%']]
const ticks = [
  ['14:56','5.12','7.1','B',13],['14:56','5.12','33.1','S',29],['14:56','5.12','11.9','S',29],['14:56','5.12','2.4','B',6],
  ['14:56','5.12','2.1','B',4],['14:56','5.11','2.2','S',13],['14:56','5.12','8.6','B',14],['14:56','5.12','75.1','B',78],
  ['14:56','5.12','16.7','S',21],['14:56','5.11','28.0','S',40],['14:56','5.11','10.0','B',5],['14:56','5.11','1.5','B',5],
  ['14:56','5.11','3.1','B',14],['14:56','5.11','3.8','S',9],['14:56','5.11','10.3','S',8],['14:56','5.12','15.3','B',20],
  ['14:56','5.11','5.3','S',10],['14:56','5.12','3.1','B',6],['14:56','5.12','1.8','B',5],['14:57','5.11','1.0','S',4],
  ['15:00','5.08','856.1','',630],
]
const indexes = [
  ['上证','3451.41','21.45','0.63%','4417'],
  ['深证','13412.9','160.68','1.21%','5771'],
  ['中小','9222.16','94.29','1.03%','675.5'],
]
</script>

<style>
html, body { margin: 0; background: #000; }
</style>

<style scoped>
.app {
  position: relative;
  width: 2160px;
  height: 1395px;
  overflow: hidden;
  background: #000;
  font-family: "Liberation Sans", "Noto Sans CJK SC", sans-serif;
  font-size: 18px;
  color: #b0b0b0;
}
em { font-style: normal; font-weight: 400; }
i { font-style: normal; }

.titlebar {
  display: flex;
  align-items: center;
  height: 34px;
  box-sizing: border-box;
  border-top: 1px solid #b0b0b0;
  background: #f2f2f2;
  color: #333;
  padding: 0 0 4px 2px;
  box-shadow: 0 1px 0 #9a9a9a;
}
.logo { flex: none; margin-top: 4px; }
.appname { margin-left: 5px; width: 172px; }
.menu { display: flex; gap: 36px; }
.menu-item { position: relative; white-space: nowrap; }
.latin { font-size: 16px; }
.dot { position: absolute; left: 44px; top: 3px; width: 5px; height: 6px; background: #e00000; }
.alert { color: #f23030; font-size: 19px; white-space: nowrap; }
.a1 { margin-left: 272px; }
.a2 { margin-left: 24px; }
.menu2 { gap: 21px; margin-left: 238px; }
.clock {
  display: flex;
  align-items: center;
  align-self: flex-start;
  margin-left: 19px;
  height: 33px;
  width: 124px;
  box-sizing: border-box;
  padding: 0 0 3px 3px;
  border-left: 1px solid #b8b8b8;
  border-right: 1px solid #b8b8b8;
  gap: 8px;
}
.time { font-size: 16px; letter-spacing: .55px; }
.winctl { display: flex; align-items: center; gap: 22px; margin-left: 22px; }

.body { display: flex; height: 1325px; margin-top: 1px; }
.left { width: 1787px; flex: none; }
.chart { display: block; }

.toolbar {
  display: flex;
  height: 31px;
  border-bottom: 2px solid #a00000;
}
.tb-icon {
  width: 34px;
  display: flex;
  align-items: center;
  justify-content: center;
  border-right: 1px solid #a00000;
}
.win-ico {
  display: inline-block;
  width: 16px;
  height: 18px;
  box-sizing: border-box;
  border: 2px solid #6a6a6a;
  border-radius: 3px;
  position: relative;
}
.win-ico::after {
  content: "";
  position: absolute;
  right: 2px;
  top: 2px;
  bottom: 2px;
  width: 3px;
  background: #999;
}
.periods { display: flex; align-items: center; gap: 13.3px; padding: 0 0 2px 7px; color: #a8a8a8; }
.periods .on { color: #30e8e8; }
.tb-cells { display: flex; margin-left: auto; height: 100%; }
.tb-cells span {
  width: 52px;
  display: flex;
  align-items: center;
  justify-content: center;
  border-left: 1px solid #a00000;
  color: #a8a8a8;
  white-space: nowrap;
}
.tb-cells span:last-child { width: 54px; }

.pane { position: relative; }
.pane-head {
  position: absolute;
  left: 4px;
  right: 82px;
  top: 2px;
  display: flex;
  align-items: center;
  gap: 7.5px;
  height: 22px;
  white-space: nowrap;
}
.head2 { left: 3px; top: 0; }
.head3 { left: 3px; top: 2px; }
.gy { color: #b4b4b4; }
.rd { color: #f00000; }
.bl { color: #0070f0; }
.wh { color: #e0e0e0; }
.yl { color: #e8e800; }
.gn { color: #58c800; }
.pu { color: #a060e0; }
.cy { color: #10d0d0; font-weight: 400; }
.ao { color: #00a8e0; }
.mg { color: #e000e0; }
.arr { font-size: 22px; line-height: 1; font-weight: 400; }
.dim { color: #707070; margin-left: -4px; }
.gap1 { margin-left: 28px; }
.gap2 { margin-left: 4px; }
.sp { margin-left: 1px; }
.sp2 { margin-left: 6px; }
.head-ico { margin-left: auto; display: flex; align-items: center; gap: 12px; padding-right: 4px; }
.chev { flex: none; }

.dots { stroke: #a00000; stroke-width: 1; stroke-dasharray: 1.5 4; }
.thin { fill: none; stroke-width: 1.6; stroke-linejoin: round; }
.ma { fill: none; stroke-width: 7; stroke-linejoin: round; }
.note { font-size: 18px; }
.gr { font-size: 18px; fill: #a8a8a8; }
.badge { font-size: 16px; fill: #fff; }
.ax { font-size: 18px; fill: #d02020; text-anchor: end; }
.ax.start { text-anchor: start; }
.boxed { font-size: 16px; fill: #c8c8c8; text-anchor: middle; }
.dateTag { font-size: 17px; fill: #d0d0d0; }
.axis-name { font-size: 18px; fill: #b0b0b0; }

.tabs {
  display: grid;
  border-top: 2px solid #a00000;
  box-sizing: border-box;
}
.tabs span {
  display: flex;
  align-items: center;
  justify-content: center;
  border-right: 1px solid #a00000;
  white-space: nowrap;
  color: #b0b0b0;
  overflow: hidden;
}
.tabs .cyan { color: #30e8e8; }
.tabs .ylw { color: #d0d000; }
.tabs1 {
  height: 26px;
  grid-template-columns: 45px 47px 63px 87px 44px 84px 85px 83px 47px 85px 83px 48px 47px 818px 44px 38px 39px;
}
.tabs2 {
  height: 27px;
  grid-template-columns: 61px 84.5px 83.5px 83.5px 84.5px 83px 138px;
  border-bottom: 2px solid #a00000;
}

.panel {
  width: 336px;
  flex: none;
  box-sizing: border-box;
  border-left: 2px solid #a00000;
}
.q-name { display: flex; align-items: center; height: 39px; padding-left: 50px; gap: 8px; }
.stock { font-size: 29px; font-weight: 700; color: #00c8f0; }
.code { font-size: 20px; font-weight: 700; color: #a0a0a0; letter-spacing: .5px; margin-top: 4px; }
.q-price {
  display: flex;
  align-items: center;
  height: 45px;
  padding: 0 4px;
  color: #00ff00;
  font-size: 27px;
  font-weight: 700;
  border-bottom: 2px solid #a00000;
  white-space: nowrap;
}
.p-chg { margin-left: 59px; font-size: 26px; }
.p-pct { margin-left: auto; font-size: 26px; }

.topline { border-top: 2px solid #a00000; }
.lbl { font-size: 23px; color: #a8a8a8; white-space: nowrap; }
.yen { margin-left: 6px; font-size: 20px; }
.v { font-size: 21.5px; text-align: right; white-space: nowrap; }
.v em, .t-vol em { font-size: 22px; }
.green { color: #00dc00; }
.red { color: #ff3030; }
.ylw { color: #c4c400; }
.mag { color: #c400c4; }
.grey { color: #a8a8a8; }

.row {
  display: grid;
  grid-template-columns: 1fr 70px 166px;
  height: 27px;
  line-height: 27px;
  padding: 0 5px 0 3px;
}
.divider {
  height: 2px;
  background: linear-gradient(to right, #b07820 0 191px, #2a6aa8 191px);
}
.buy { padding: 1px 0 2px; }
.row2 {
  display: grid;
  grid-template-columns: 72px 89px 70px 1fr;
  height: 28.5px;
  line-height: 28.5px;
  padding: 0 3px;
}
.row2 .l2 { padding-left: 8px; }
.v1 { text-align: right; }
.stat { padding-top: 0; }
.stat2 { padding: 1px 0 5px; }
.row3 {
  display: grid;
  grid-template-columns: 138px 58px 70px 63px;
  height: 28.25px;
  line-height: 28.25px;
  padding-left: 3px;
}
.flow { padding-bottom: 4px; }
.barcell { display: flex; align-items: center; }
.bar { display: block; height: 10px; background: #00e800; }
.bar.slim { background: #00c000; }
.fv, .fp { font-size: 21px; color: #00e000; font-weight: 400; }
.row4 {
  display: grid;
  grid-template-columns: 66px 89px 94px 46px 1fr;
  height: 27px;
  line-height: 27px;
  padding: 0 4px 0 3px;
  font-size: 20.5px;
  white-space: nowrap;
}
.t-time { color: #a8a8a8; }
.t-px { text-align: right; }
.t-vol { text-align: right; }
.t-bs { text-align: center; }
.t-ct { text-align: right; color: #808080; }

.side {
  flex: 1;
  background: #f2f2f2;
  display: flex;
  flex-direction: column;
  margin-top: -1px;
}
.tool {
  height: 34.6px;
  flex: none;
  display: flex;
  align-items: center;
  justify-content: center;
}
.tool-sep {
  height: 11.4px;
  flex: none;
  display: flex;
  align-items: center;
}
.tool-sep::after { content: ""; display: block; width: 28px; height: 2px; margin-left: 5px; background: #bbb; }
.arrow { fill: #fff; stroke: #4a8ee0; stroke-width: 1.8; }
.frame { fill: #fff; stroke: #5a9ae0; stroke-width: 2; }
.boxed-t {
  display: flex;
  align-items: center;
  justify-content: center;
  width: 24px;
  height: 24px;
  box-sizing: border-box;
  border: 2px solid #5a9ae0;
  background: #fff;
  color: #2a70c8;
  font-size: 14px;
  letter-spacing: -1px;
  overflow: hidden;
  white-space: nowrap;
}
.zi { color: #e88020; font-weight: 700; }
.fx { border-color: #40a090; border-radius: 7px; font-size: 13px; font-style: italic; color: #1848a8; }
.rsi { font-size: 15px; font-weight: 700; color: #3a50b0; }
.big-s { font-size: 24px; font-weight: 700; color: #d83030; text-shadow: 1px 1px 1px #aaa; }
.nm { color: #2458a8; font-size: 18px; }
.nm span { display: flex; align-items: center; justify-content: center; }
.active span {
  width: 31px;
  height: 31px;
  box-sizing: border-box;
  background: #fff;
  border: 1px solid #b8b8b8;
  border-bottom: 0;
  border-right: 0;
}

.status {
  display: grid;
  grid-template-columns: 25px 54px 101px 76px 86px 94px 54px 96px 81px 86px 97px 52px 102px 75px 86px 98px 1fr;
  align-items: center;
  height: 35px;
  background: #f0f0f0;
  white-space: nowrap;
}
.ix-name { font-size: 23px; color: #222; }
.ix-red { font-size: 20.5px; color: #f01010; font-weight: 700; }
.ix-amt { font-size: 20.5px; color: #111; font-weight: 700; }
.ix-amt em { font-size: 23px; }
.ix-total { font-size: 23px; color: #222; border-left: 2px solid #aaa; padding-left: 2px; height: 35px; line-height: 35px; }

.watermark {
  position: absolute;
  left: 1361px;
  top: 1314px;
  width: 799px;
  height: 81px;
  display: flex;
  align-items: center;
  background: rgba(127, 171, 217, .97);
}
.wm-cn {
  margin-left: 14px;
  font-family: "Noto Sans CJK SC", sans-serif;
  font-size: 56px;
  font-weight: 900;
  color: #1c1c96;
  line-height: 1;
  white-space: nowrap;
}
.wm-logo { margin-left: 22px; flex: none; }
.wm-small { font-size: 8px; fill: #fff; font-weight: 700; }
.wm-url {
  margin-left: 26px;
  font-family: "Liberation Serif", serif;
  font-size: 63px;
  font-weight: 700;
  color: #fff;
  line-height: 1;
  -webkit-text-stroke: 1px #fff;
  white-space: nowrap;
}
</style>
